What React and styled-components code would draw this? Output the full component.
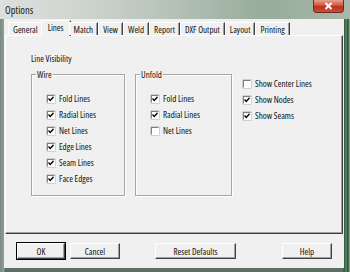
import React from 'react';
import styled, { createGlobalStyle } from 'styled-components';

const GlobalStyle = createGlobalStyle`
  html, body {
    margin: 0;
    padding: 0;
    background: #6f8572;
  }
  body {
    font-family: "Open Sans", "Liberation Sans", Arial, sans-serif;
    font-stretch: 75%;
    font-weight: 370;
    font-size: 9px;
    color: #111;
  }
`;

const Window = styled.div`
  width: 350px;
  height: 272px;
  display: flex;
  flex-direction: column;
  overflow: hidden;
  background:
    linear-gradient(90deg, #7c8a86 0px, #8f9c97 4px, transparent 5px, transparent 343px, #2d4f37 344px, #5c8c64 346px, #2b4a33 348px, #a7c2a7 350px),
    linear-gradient(180deg, #c9d0ca 0%, #a9b6ac 40%, #5d6f62 100%);
`;

const TitleBar = styled.div`
  height: 19px;
  display: flex;
  align-items: flex-start;
  padding: 0 6px 0 5px;
  background: linear-gradient(90deg, #dde1dd 0%, #cdd3ce 25%, #b4c1b6 50%, #98ac9b 75%, #a7b9a9 100%);
`;

const Title = styled.div`
  margin-top: 3px;
  font-size: 10.5px;
  font-stretch: 85%;
  color: #1a1a1a;
  flex: 1;
`;

const CloseButton = styled.div`
  width: 31px;
  height: 13px;
  border: 1px solid #6b2b22;
  border-top: none;
  border-radius: 0 0 4px 4px;
  box-sizing: border-box;
  background: linear-gradient(180deg, #e8a08e 0%, #d2553d 45%, #b8321c 55%, #c9503a 100%);
  display: flex;
  align-items: center;
  justify-content: center;
`;

const Client = styled.div`
  margin: 0 6px 0 4px;
  height: 249px;
  background: #f0f0f0;
  display: flex;
  flex-direction: column;
`;

const TabStrip = styled.div`
  display: flex;
  align-items: flex-end;
  padding-left: 4px;
  margin-top: 3px;
  height: 13px;
  position: relative;
  z-index: 1;
`;

const Tab = styled.div`
  height: ${p => (p.active ? '16px' : '13px')};
  margin-bottom: ${p => (p.active ? '-1px' : '0')};
  margin-left: ${p => (p.active ? '-2px' : '0')};
  margin-right: ${p => (p.active ? '-2px' : '0')};
  padding: 0 ${p => (p.active ? '6px' : '4px')};
  box-sizing: border-box;
  background: #f0f0f0;
  border-top: 1px solid #fff;
  border-left: 1px solid #fff;
  border-right: 1px solid #404040;
  box-shadow: inset -1px 0 0 #a0a0a0;
  display: flex;
  align-items: ${p => (p.active ? 'flex-start' : 'center')};
  padding-top: ${p => (p.active ? '1px' : '0')};
  white-space: nowrap;
  line-height: 11px;
`;

const TabPanel = styled.div`
  margin: 0 1px;
  height: 199px;
  box-sizing: border-box;
  border-top: 1px solid #fff;
  border-left: 1px solid #fff;
  border-right: 1px solid #404040;
  border-bottom: 1px solid #404040;
  box-shadow: inset -1px -1px 0 #a0a0a0;
  padding: 17px 0 0 25px;
`;

const SectionLabel = styled.div`
  height: 11px;
  line-height: 11px;
`;

const GroupsRow = styled.div`
  display: flex;
  align-items: flex-start;
  margin-top: 10px;
`;

const Group = styled.div`
  position: relative;
  width: ${p => p.w}px;
  height: 122px;
  box-sizing: border-box;
  border: 1px solid #a6a6a6;
  box-shadow: 1px 1px 0 #fff, inset 1px 1px 0 #fff;
  margin-right: ${p => p.gap}px;
  padding: 18px 0 0 15px;
  display: flex;
  flex-direction: column;
  gap: 5px;
`;

const Legend = styled.span`
  position: absolute;
  top: -5px;
  left: 4px;
  padding: 0 1px;
  background: #f0f0f0;
  line-height: 10px;
`;

const Column = styled.div`
  display: flex;
  flex-direction: column;
  gap: 5px;
  padding-top: 4px;
`;

const CheckRow = styled.div`
  display: flex;
  align-items: center;
  height: 11px;
  gap: 4px;
  white-space: nowrap;
`;

const Box = styled.span`
  width: 8px;
  height: 8px;
  box-sizing: border-box;
  background: #fff;
  border-top: 1px solid #808080;
  border-left: 1px solid #808080;
  border-right: 1px solid #fff;
  border-bottom: 1px solid #fff;
  box-shadow: 0 0 0 0.5px #b0b0b0;
  display: flex;
  align-items: center;
  justify-content: center;
`;

const ButtonRow = styled.div`
  display: flex;
  padding-left: 13px;
  margin-top: 9px;
`;

const Button = styled.div`
  width: ${p => p.w}px;
  height: 16px;
  margin-right: ${p => p.gap}px;
  box-sizing: border-box;
  background: #f0f0f0;
  border-top: 1px solid #fff;
  border-left: 1px solid #fff;
  border-right: 1px solid #404040;
  border-bottom: 1px solid #404040;
  box-shadow: inset -1px -1px 0 #a0a0a0${p => (p.primary ? ', 0 0 0 1px #000' : '')};
  display: flex;
  align-items: center;
  justify-content: center;
`;

const CheckBox = ({ checked, label }) => (
  <CheckRow>
    <Box>
      {checked && (
        <svg width="6" height="6" viewBox="0 0 6 6">
          <path d="M0.5 2.5 L2.3 4.5 L5.5 0.8" fill="none" stroke="#000" strokeWidth="1.3" />
        </svg>
      )}
    </Box>
    {label}
  </CheckRow>
);

const tabs = ['General', 'Lines', 'Match', 'View', 'Weld', 'Report', 'DXF Output', 'Layout', 'Printing'];

const wire = ['Fold Lines', 'Radial Lines', 'Net Lines', 'Edge Lines', 'Seam Lines', 'Face Edges'];

const unfold = [
  { label: 'Fold Lines', checked: true },
  { label: 'Radial Lines', checked: true },
  { label: 'Net Lines', checked: false },
];

const extras = [
  { label: 'Show Center Lines', checked: false },
  { label: 'Show Nodes', checked: true },
  { label: 'Show Seams', checked: true },
];

const App = () => (
  <>
    <GlobalStyle />
    <Window>
      <TitleBar>
        <Title>Options</Title>
        <CloseButton>
          <svg width="9" height="8" viewBox="0 0 9 8">
            <path d="M1.5 1 L7.5 7 M7.5 1 L1.5 7" stroke="#fff" strokeWidth="2" />
          </svg>
        </CloseButton>
      </TitleBar>
      <Client>
        <TabStrip>
          {tabs.map(t => (
            <Tab key={t} active={t === 'Lines'}>{t}</Tab>
          ))}
        </TabStrip>
        <TabPanel>
          <SectionLabel>Line Visibility</SectionLabel>
          <GroupsRow>
            <Group w={94} gap={10}>
              <Legend>Wire</Legend>
              {wire.map(l => (
                <CheckBox key={l} checked label={l} />
              ))}
            </Group>
            <Group w={97} gap={11}>
              <Legend>Unfold</Legend>
              {unfold.map(i => (
                <CheckBox key={i.label} checked={i.checked} label={i.label} />
              ))}
            </Group>
            <Column>
              {extras.map(i => (
                <CheckBox key={i.label} checked={i.checked} label={i.label} />
              ))}
            </Column>
          </GroupsRow>
        </TabPanel>
        <ButtonRow>
          <Button w={48} gap={5} primary>OK</Button>
          <Button w={50} gap={35}>Cancel</Button>
          <Button w={81} gap={46}>Reset Defaults</Button>
          <Button w={50} gap={0}>Help</Button>
        </ButtonRow>
      </Client>
    </Window>
  </>
);

export default App;
